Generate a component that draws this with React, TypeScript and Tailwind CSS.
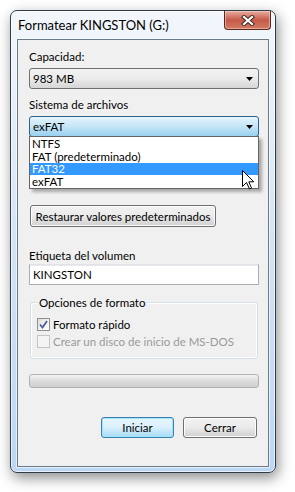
import React from "react";

const font = "font-['Lato','Noto_Sans',sans-serif]";
const txt = "text-[11.5px] leading-[15px]";

function Arrow() {
  return (
    <svg width="7" height="4" viewBox="0 0 7 4" className="shrink-0">
      <polygon points="0,0 7,0 3.5,4" fill="#000" />
    </svg>
  );
}

function Combo({ value, open }: { value: string; open?: boolean }) {
  return (
    <div
      className={
        "h-[21px] flex items-center justify-between pl-[3px] pr-[5px] rounded-[3px] border " +
        (open
          ? "border-[#2c628b] bg-gradient-to-b from-[#e5f4fc] via-[#c4e5f6] to-[#98d1ef]"
          : "border-[#707070] bg-gradient-to-b from-[#f2f2f2] via-[#ebebeb] to-[#d6d6d6]")
      }
    >
      <span className={txt + " text-black"}>{value}</span>
      <Arrow />
    </div>
  );
}

function Button({ label, primary, className }: { label: string; primary?: boolean; className?: string }) {
  return (
    <div
      className={
        "h-[21px] flex items-center justify-center whitespace-nowrap rounded-[3px] border text-black " +
        txt +
        " " +
        (primary
          ? "border-[#3c7fb1] bg-gradient-to-b from-[#eaf6fd] via-[#d9f0fc] to-[#a7d9f5] shadow-[inset_0_0_0_1px_#9fe6fd]"
          : "border-[#707070] bg-gradient-to-b from-[#f2f2f2] via-[#ebebeb] to-[#cfcfcf] shadow-[inset_0_0_0_1px_#fcfcfc]") +
        " " +
        (className ?? "")
      }
    >
      {label}
    </div>
  );
}

function Checkbox({ checked, disabled, label }: { checked?: boolean; disabled?: boolean; label: string }) {
  return (
    <div className="flex items-center h-[13px]">
      <div
        className={
          "w-[13px] h-[13px] border flex items-center justify-center " +
          (disabled
            ? "border-[#c4c4c4] bg-[#f4f4f4]"
            : "border-[#8e8f8f] bg-gradient-to-br from-[#dcdcdc] via-[#f2f2f2] to-[#ffffff]")
        }
      >
        {checked && (
          <svg width="9" height="9" viewBox="0 0 9 9">
            <path d="M1 4.5 L3.5 7.5 L8 1" fill="none" stroke="#4a5f97" strokeWidth="1.8" />
          </svg>
        )}
      </div>
      <span className={"ml-[3px] whitespace-nowrap " + txt + " " + (disabled ? "text-[#9a9a9a]" : "text-black")}>
        {label}
      </span>
    </div>
  );
}

function Cursor() {
  return (
    <svg width="13" height="20" viewBox="0 0 13 20" className="absolute left-[213px] top-[54px]">
      <path
        d="M0.5 0.5 L0.5 16.5 L4.5 12.5 L7.5 19 L9.5 18 L6.8 11.8 L11.8 11.8 Z"
        fill="#fff"
        stroke="#000"
        strokeWidth="1"
        strokeLinejoin="round"
      />
    </svg>
  );
}

export default function App() {
  const items = ["NTFS", "FAT (predeterminado)", "FAT32", "exFAT"];

  return (
    <div className={"w-[295px] h-[492px] bg-white overflow-hidden pt-[10px] pl-[10px] " + font}>
      <div className="relative w-[266px] h-[463px] rounded-[7px] border border-[#2f3b48] bg-gradient-to-b from-[#f3f7fc] via-[#d3e3f4] to-[#bcd7f4] shadow-[inset_0_0_0_1px_rgba(255,255,255,0.65),2px_5px_14px_rgba(0,0,0,0.45)] flex flex-col px-[6px] pb-[5px]">
        {/* title bar */}
        <div className="h-[28px] flex items-center pl-[1px]">
          <span className="text-[13px] leading-[15px] text-black">Formatear KINGSTON (G:)</span>
        </div>
        <div className="absolute top-0 right-[4px] w-[47px] h-[19px] rounded-b-[4px] border border-t-0 border-[#5a2620] bg-gradient-to-b from-[#e6ada1] via-[#c65a48] to-[#d27a64] shadow-[inset_0_0_0_1px_rgba(255,220,210,0.5)] flex items-center justify-center">
          <svg width="14" height="11" viewBox="0 0 14 11">
            <path d="M3 2 L11 9 M11 2 L3 9" stroke="#3d2a28" strokeWidth="4.2" strokeLinecap="square" />
            <path d="M3 2 L11 9 M11 2 L3 9" stroke="#ffffff" strokeWidth="2.2" strokeLinecap="square" />
          </svg>
        </div>

        {/* client area */}
        <div className="flex-1 border border-[#6b7a8a] bg-[#f0f0f0] shadow-[0_0_0_1px_rgba(255,255,255,0.6)] pl-[11px] pr-[9px] flex flex-col">
          <div className={"mt-[9px] text-black " + txt}>Capacidad:</div>
          <div className="mt-[4px]">
            <Combo value="983 MB" />
          </div>

          <div className={"mt-[8px] text-black " + txt}>Sistema de archivos</div>
          <div className="mt-[4px] relative">
            <Combo value="exFAT" open />
            <div className="absolute left-0 right-0 top-[20px] z-10 h-[53px] border border-[#646464] bg-white shadow-[3px_3px_3px_rgba(0,0,0,0.3)] flex flex-col">
              {items.map((item) => (
                <div
                  key={item}
                  className={
                    "h-[13px] flex items-center pl-[2px] text-[11.5px] leading-[13px] overflow-hidden " +
                    (item === "FAT32" ? "bg-[#3399ff] text-white" : "text-black")
                  }
                >
                  {item}
                </div>
              ))}
            </div>
            <div className="absolute left-0 top-0 z-20">
              <Cursor />
            </div>
          </div>

          <Button label="Restaurar valores predeterminados" className="mt-[68px] w-[186px] h-[22px] ml-[1px]" />

          <div className={"mt-[21px] text-black " + txt}>Etiqueta del volumen</div>
          <div
            className={
              "mt-[1px] h-[21px] border border-[#abadb3] border-t-[#e2e3ea] bg-white flex items-center pl-[3px] text-black shadow-[inset_0_1px_0_#e8e8e8] " +
              txt
            }
          >
            KINGSTON
          </div>

          <div className="relative mt-[17px] mx-[1px] h-[57px] rounded-[3px] border border-[#d5dfe5] shadow-[inset_0_0_0_1px_#fff] pt-[15px] pl-[6px] flex flex-col gap-[4px]">
            <span className={"absolute -top-[8px] left-[6px] bg-[#f0f0f0] px-[2px] text-black " + txt}>
              Opciones de formato
            </span>
            <Checkbox checked label="Formato rápido" />
            <Checkbox disabled label="Crear un disco de inicio de MS-DOS" />
          </div>

          <div className="mt-[15px] h-[14px] rounded-[3px] border border-[#b2b2b2] bg-gradient-to-b from-[#f3f3f3] via-[#dcdcdc] to-[#cfcfcf]" />

          <div className="mt-[29px] flex justify-end gap-[9px] pr-[2px]">
            <Button label="Iniciar" primary className="w-[73px]" />
            <Button label="Cerrar" className="w-[74px]" />
          </div>
        </div>
      </div>
    </div>
  );
}
